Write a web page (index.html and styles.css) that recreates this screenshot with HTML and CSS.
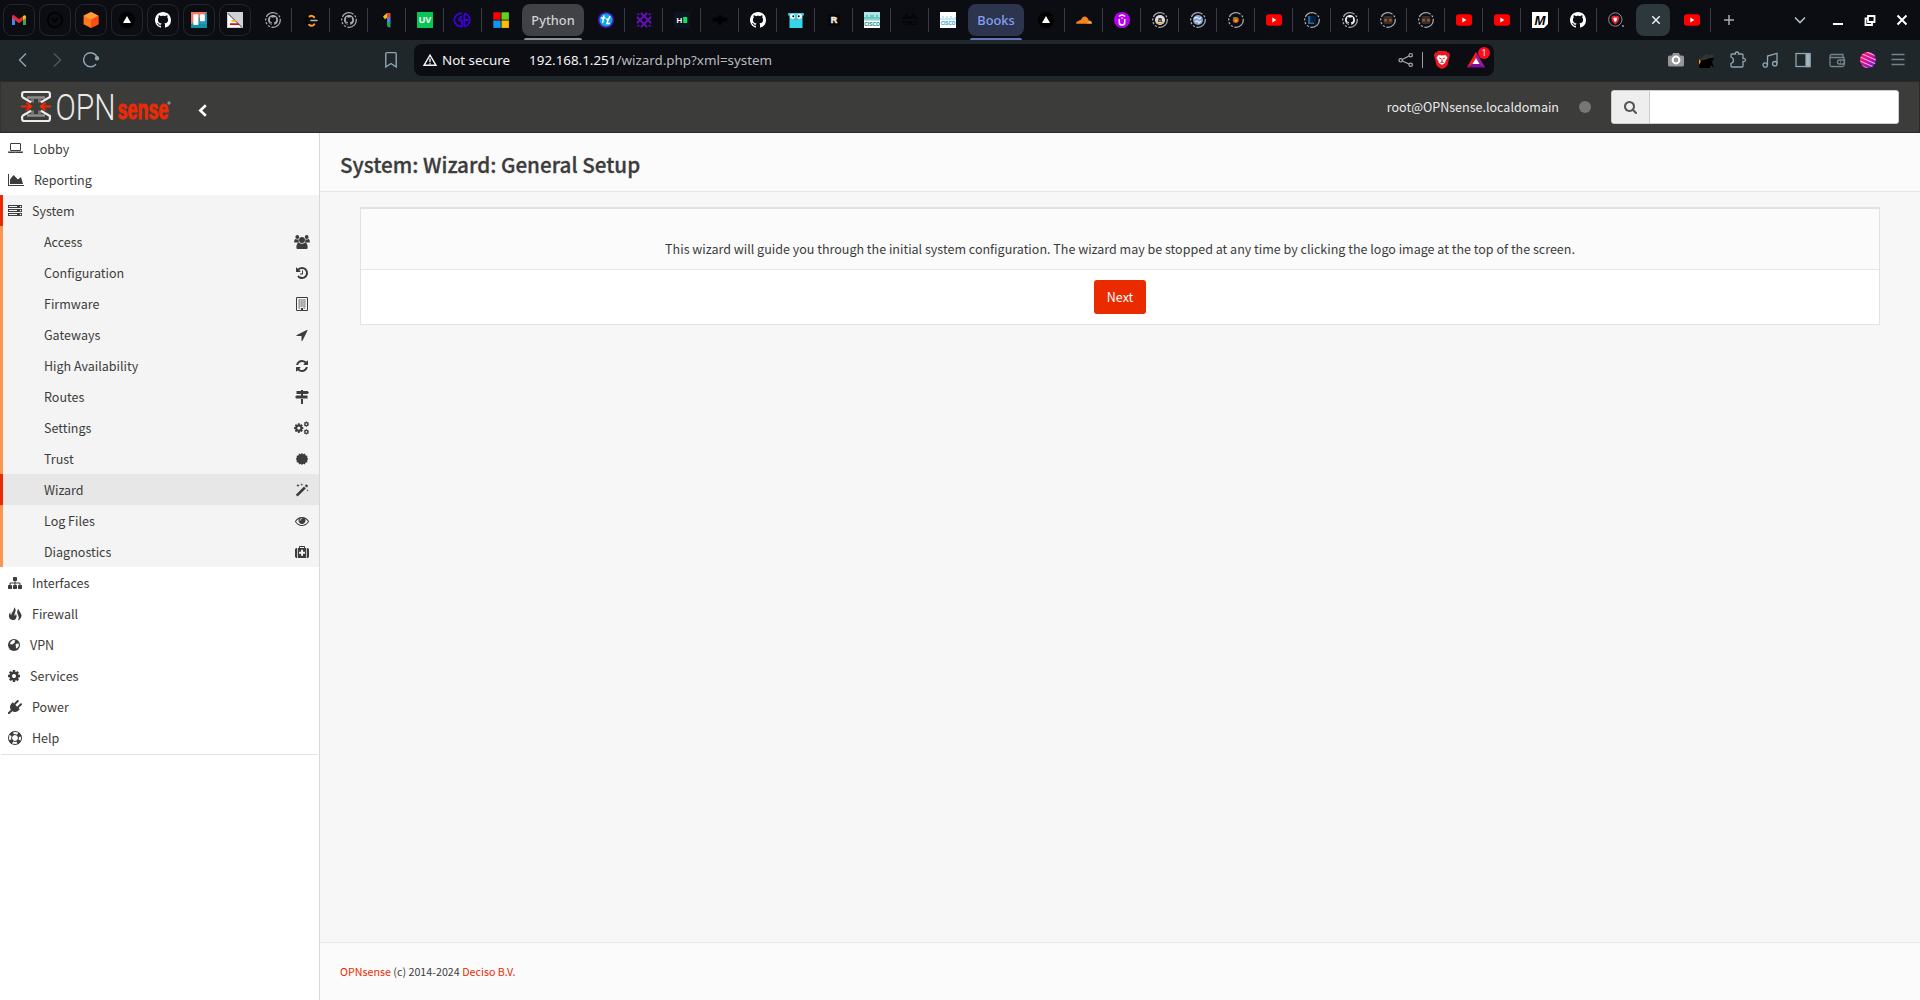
FILE: index.html
```html
<!DOCTYPE html>
<html lang="en">
<head>
<meta charset="utf-8">
<title>Wizard: General Setup | System | OPNsense.localdomain</title>
<link rel="stylesheet" href="styles.css">
</head>
<body>
<svg class="defs" aria-hidden="true">
  <symbol id="github" viewBox="0 0 16 16"><path d="M8 0C3.58 0 0 3.58 0 8c0 3.54 2.29 6.53 5.47 7.59.4.07.55-.17.55-.38 0-.19-.01-.82-.01-1.49-2.01.37-2.53-.49-2.69-.94-.09-.23-.48-.94-.82-1.13-.28-.15-.68-.52-.01-.53.63-.01 1.08.58 1.23.82.72 1.21 1.87.87 2.33.66.07-.52.28-.87.51-1.07-1.78-.2-3.64-.89-3.64-3.95 0-.87.31-1.59.82-2.15-.08-.2-.36-1.02.08-2.12 0 0 .67-.21 2.2.82.64-.18 1.32-.27 2-.27s1.36.09 2 .27c1.53-1.04 2.2-.82 2.2-.82.44 1.1.16 1.92.08 2.12.51.56.82 1.27.82 2.15 0 3.07-1.87 3.75-3.65 3.95.29.25.54.73.54 1.48 0 1.07-.01 1.93-.01 2.2 0 .21.15.46.55.38A8.01 8.01 0 0 0 16 8c0-4.42-3.58-8-8-8z"/></symbol>
  <symbol id="ring" viewBox="0 0 16 16"><circle cx="8" cy="8" r="7.3" fill="none" stroke="#a4a9b0" stroke-width="1.3" stroke-dasharray="13 1.6 2.2 1.6 2.2 1.6 2.2 1.6"/></symbol>
  <symbol id="githubring" viewBox="0 0 16 16"><use href="#ring"/><use href="#github" x="3" y="3" width="10" height="10" fill="#a9adb2"/></symbol>
  <symbol id="youtube" viewBox="0 0 16 16"><rect y="2.3" width="16" height="11.5" rx="2.8" fill="#f00"/><path d="M6.3 5.6v4.8L10.4 8z" fill="#fff"/></symbol>
  <symbol id="vercel" viewBox="0 0 16 16"><circle cx="8" cy="8" r="8" fill="#000"/><path d="M8 4l4 7H4z" fill="#fff"/></symbol>
  <symbol id="cog" viewBox="0 0 1536 1792"><path transform="translate(-128)" d="M1152 896q0-106-75-181t-181-75-181 75-75 181 75 181 181 75 181-75 75-181zm512-109v222q0 12-8 23t-20 13l-185 28q-19 54-39 91 35 50 107 138 10 12 10 25t-9 23q-27 37-99 108t-94 71q-12 0-26-9l-138-108q-44 23-91 38-16 136-29 186-7 28-36 28h-222q-14 0-24.5-8.5t-11.5-21.5l-28-184q-49-16-90-37l-141 107q-10 9-25 9-14 0-25-11-126-114-165-168-7-10-7-23 0-12 8-23 15-21 51-66.500t54-70.500q-27-50-41-99l-183-27q-13-2-21-12.500t-8-23.500v-222q0-12 8-23t19-13l186-28q14-46 39-92-40-57-107-138-10-12-10-24 0-10 9-23 26-36 98.500-107.500t94.500-71.500q13 0 26 10l138 107q44-23 91-38 16-136 29-186 7-28 36-28h222q14 0 24.500 8.500t11.500 21.500l28 184q49 16 90 37l142-107q9-9 24-9 13 0 25 10 129 119 165 170 7 8 7 22 0 12-8 23-15 21-51 66.500t-54 70.500q26 50 41 98l183 28q13 2 21 12.500t8 23.500z"/></symbol>
</svg>

<div class="tabstrip">
  <div class="pinned">
    <span class="pin"><svg viewBox="0 0 16 16"><path d="M1 4v9h3V8z" fill="#4285f4"/><path d="M15 4v9h-3V8z" fill="#34a853"/><path d="M1.200 3.600C2 2.600 3 3 4 4l4 3.200L12 4v4.200L8 11.300 4 8.300 1 6z" fill="#ea2a33"/><path d="M12 4c1-1.200 3-1 3 .8V6l-3 2.300z" fill="#fbbc04"/></svg></span>
    <span class="pin"><svg viewBox="0 0 16 16" fill="none" stroke="#000" stroke-width="1.600"><circle cx="8" cy="8" r="7.200"/><path d="M4.500 6l3.300 3.500L11.500 6"/></svg></span>
    <span class="pin"><svg viewBox="0 0 16 16"><path d="M8 0l7.400 3.800v8.400L8 16 .6 12.200V3.800z" fill="#ff7a1a"/><path d="M8 0l7.400 3.800L8 7.600.6 3.800z" fill="#ff9a3c"/><path d="M8 7.600l7.400-3.800v8.400L8 16z" fill="#ff4d12"/></svg></span>
    <span class="pin"><svg><use href="#vercel"/></svg></span>
    <span class="pin"><svg fill="#fff"><use href="#github"/></svg></span>
    <span class="pin"><svg viewBox="0 0 16 16"><path d="M0 0h16v16H0z" fill="#2796b5"/><path d="M0 0h16L0 12z" fill="#ef7b64"/><path d="M0 12h16v4H0z" fill="#1192a6"/><rect x="2.300" y="2.300" width="5" height="10.700" rx=".8" fill="#fff"/><rect x="9" y="2.300" width="4.800" height="7" rx=".8" fill="#fff"/></svg></span>
    <span class="pin"><svg viewBox="0 0 16 16"><path d="M0 0h16v16H0z" fill="#d2d2d2"/><path d="M1 2l13.500 13H1z" fill="#fff"/><path d="M1 1.500L15 15.500" stroke="#26386e"/><path d="M4.500 8h3.500l1.500 1.800H4.500z" fill="#f5b400"/><path d="M3 11.200h8l1.700 1.900H3z" fill="#d31111"/></svg></span>
  </div>
  <div class="tabs">
    <span class="tab"><svg><use href="#githubring"/></svg></span>
    <span class="tab"><svg viewBox="0 0 16 16" fill="none" stroke-width="1.900" stroke-linecap="round"><path d="M9.500 1.500L3.600 6.700q-2 2 0 4l3.200 3" stroke="#050505"/><path d="M6.500 4.500q2-1.800 4.700.8M6 12.800q2.700 2.300 5.200-.5" stroke="#ffa116"/><path d="M8 8.500h6" stroke="#b3b3b3" stroke-width="1.500"/></svg></span>
    <span class="tab"><svg><use href="#githubring"/></svg></span>
    <span class="tab"><svg viewBox="0 0 16 16"><path d="M4 4.500L8 1v4.500L6 7.500z" fill="#fbbc04"/><path d="M8 1h3.500v5L8 7z" fill="#ea4335"/><path d="M8 6l3.500-1v6H8z" fill="#4285f4"/><path d="M8 10h3.500v5.500Q8 15.500 8 13z" fill="#1ea55b"/></svg></span>
    <span class="tab"><svg viewBox="0 0 16 16"><path d="M0 0h16v16H0z" fill="#06c755"/><text x="8" y="11" class="glyph" font-size="8.500" fill="#fff" textLength="12.500" lengthAdjust="spacingAndGlyphs">UV</text></svg></span>
    <span class="tab"><svg viewBox="0 0 16 16" fill="none" stroke="#3a00e0" stroke-width="1.800"><path d="M7 1.500a6.600 6.600 0 1 0 0 13V8.500H4M7 5Q4.200 5 4 8.500M9.300 1.500v13M9.300 1.500a6.600 6.600 0 0 1 0 13M9.300 8h4"/></svg></span>
    <span class="tab"><svg viewBox="0 0 16 16"><path d="M.3.3h7.400v7.400H.3z" fill="#f00"/><path d="M8.500.3h7.400v7.400H8.500z" fill="#5fd41c"/><path d="M.3 8.500h7.400v7.400H.3z" fill="#0a9bf5"/><path d="M8.500 8.500h7.400v7.400H8.500z" fill="#ffbf00"/></svg></span>
  </div>
  <div class="group group-gray"><span>Python</span></div>
  <div class="tabs">
    <span class="tab"><svg viewBox="0 0 16 16"><circle cx="8" cy="8" r="8" fill="#4a12c0"/><circle cx="8" cy="8" r="6.500" fill="#10a9dc"/><path d="M3 6h4.500M6 3.500L4.500 11M8.500 6.500l1.500 2 2-4.500M10 8l-1 3.500h3" fill="none" stroke="#fff" stroke-width="1.500"/></svg></span>
    <span class="tab"><svg viewBox="0 0 16 16" fill="none" stroke="#5f10b0" stroke-width="2.200" stroke-linecap="round"><path d="M1.500 5.500l3 3M5.500 1.500L11 7M14.500 10.500l-3-3M10.500 14.500L5 9M10.500 1.500l-3 3M14.500 5.500L9 11M5.500 14.500l3-3M1.500 10.500L7 5M2.200 2.200l.1.100M13.700 2.200l.1.100M2.200 13.700l.1.100M13.700 13.700l.1.100"/></svg></span>
    <span class="tab"><svg viewBox="0 0 16 16"><path d="M0 0h16v16H0z" fill="#0d1420"/><text x="5.500" y="11" class="glyph" font-size="8" fill="#fff">H</text><path d="M9.200 5h4v6h-4z" fill="#06e968"/></svg></span>
    <span class="tab"><svg viewBox="0 0 16 16" fill="#000"><path d="M0 7q4-3 6.500-.5l-1 3Q1.500 11 0 7zM16 7q-4-3-6.500-.5l1 3Q14.500 11 16 7z"/><ellipse cx="8" cy="8" rx="2.300" ry="5"/></svg></span>
    <span class="tab"><svg fill="#fff"><use href="#github"/></svg></span>
    <span class="tab"><svg viewBox="0 0 16 16"><path d="M1.500 16V3q0-2 2-2h9q2 0 2 2v13z" fill="#35d6ec"/><circle cx="1.500" cy="2.200" r="1.500" fill="#35d6ec"/><circle cx="14.500" cy="2.200" r="1.500" fill="#35d6ec"/><circle cx="4.500" cy="4.300" r="2.500" fill="#fff"/><circle cx="11.500" cy="4.300" r="2.500" fill="#fff"/><circle cx="5.300" cy="4.300" r="1"/><circle cx="10.700" cy="4.300" r="1"/><ellipse cx="8" cy="7.500" rx="1.500" ry="1" fill="#b28d5b"/></svg></span>
    <span class="tab"><svg viewBox="0 0 16 16"><rect x="2" y="2" width="12" height="12" rx="2" fill="#050505"/><text x="8" y="11.200" class="glyph" font-size="9" fill="#f5efdf" stroke="#f5efdf" stroke-width=".5">R</text></svg></span>
    <span class="tab"><svg viewBox="0 0 16 16"><path d="M0 0h16v16H0z" fill="#fff"/><path d="M0 0h16v9H0z" fill="#aee6e3"/><path d="M1 5v2.500M3 3v4.500M5 5v2.500M7 3v4.500M9 3v4.500M11 5v2.500M13 3v4.500M15 5v2.500" stroke="#29a9ad"/><text x="8" y="13.800" class="glyph" font-size="6" fill="#087c88" textLength="15.500" lengthAdjust="spacingAndGlyphs">CISCO</text></svg></span>
    <span class="tab"><svg viewBox="0 0 16 16"><path d="M1 5v2M3 3v4M5 1v6M7 4v3M9 4v3M11 1v6M13 3v4M15 5v2" stroke="#000"/><text x="8" y="13.400" class="glyph" font-size="5.500" fill="#000" textLength="15" lengthAdjust="spacingAndGlyphs">CISCO</text></svg></span>
    <span class="tab"><svg viewBox="0 0 16 16"><path d="M0 0h16v16H0z" fill="#fff"/><path d="M1 6v2M3 4v4M5 6v2M7 4v4M9 6v2M11 4v4M13 6v2M15 5v3" stroke="#8bcfe8"/><text x="8" y="13.300" class="glyph" font-size="5.500" fill="#18a0cf" textLength="14.500" lengthAdjust="spacingAndGlyphs">CISCO</text></svg></span>
  </div>
  <div class="group group-blue"><span>Books</span></div>
  <div class="tabs">
    <span class="tab"><svg><use href="#vercel"/></svg></span>
    <span class="tab"><svg viewBox="0 0 16 16"><path d="M0 11.800q0-2.500 2.500-2.800Q4 7.500 5 8q1-3.500 3.800-3.500T13 9l-1.500 2.800z" fill="#f6821f"/><path d="M11 11.800L13 8.500q3 .5 3 3.300z" fill="#fbad41"/></svg></span>
    <span class="tab"><svg viewBox="0 0 16 16"><circle cx="8" cy="8" r="8" fill="#b800f0"/><path d="M5.300 7v3.500q0 2.500 2.700 2.500t2.700-2.500V7M5 4.500Q8 1.300 11 4.500M8 5.500v1.200" fill="none" stroke="#fff" stroke-width="1.500"/></svg></span>
    <span class="tab"><svg viewBox="0 0 16 16"><use href="#ring"/><circle cx="8" cy="8" r="5" fill="#ddd"/><text x="8" y="10" class="glyph" font-size="8" fill="#111">a</text><path d="M4.500 10.500q3.500 2.500 7 0" stroke="#f0a030" stroke-width="1.200" fill="none"/></svg></span>
    <span class="tab"><svg viewBox="0 0 16 16"><use href="#ring"/><circle cx="8" cy="8" r="5" fill="#7d9fce"/><path d="M4 7q2-3 4-1t3-1M5 10q3-2 4 1l2-2" stroke="#dbe6f4" stroke-width="1.300" fill="none"/></svg></span>
    <span class="tab"><svg viewBox="0 0 16 16"><use href="#ring"/><circle cx="7.800" cy="8" r="3" fill="#d8601c"/><path d="M5 5l3 .5L6 8z" fill="#3fa048"/><circle cx="8" cy="8.500" r="1.100" fill="#f5c022"/></svg></span>
    <span class="tab"><svg><use href="#youtube"/></svg></span>
    <span class="tab"><svg viewBox="0 0 16 16"><use href="#ring"/><path d="M4 4h8v8H4z" fill="#071f3c"/><path d="M4 4h2.200v8H4zM6 10.500h4V12H6z" fill="#1c68a5"/></svg></span>
    <span class="tab"><svg viewBox="0 0 16 16"><use href="#ring"/><use href="#github" x="3" y="3" width="10" height="10" fill="#eee"/></svg></span>
    <span class="tab"><svg viewBox="0 0 16 16"><use href="#ring"/><rect x="3.500" y="4" width="9" height="8" rx="2" fill="#33302e"/><path d="M4.300 7h2.500v2.500H4.300zM9.200 7h2.500v2.500H9.200z" fill="#b8501c"/></svg></span>
    <span class="tab"><svg viewBox="0 0 16 16"><use href="#ring"/><rect x="3.500" y="4" width="9" height="8" rx="2" fill="#33302e"/><path d="M4.300 7h2.500v2.500H4.300zM9.200 7h2.500v2.500H9.200z" fill="#b8501c"/></svg></span>
    <span class="tab"><svg><use href="#youtube"/></svg></span>
    <span class="tab"><svg><use href="#youtube"/></svg></span>
    <span class="tab"><svg viewBox="0 0 16 16"><path d="M0 0h16v12l-4 4H0z" fill="#fff"/><text x="8" y="12.500" class="glyph" font-size="12.500" font-style="italic" fill="#000" textLength="11" lengthAdjust="spacingAndGlyphs">M</text></svg></span>
    <span class="tab"><svg fill="#fff"><use href="#github"/></svg></span>
    <span class="tab"><svg viewBox="0 0 16 16"><circle cx="7.300" cy="7.500" r="6.700" fill="none" stroke="#888d93"/><path d="M4.500 3.800h5.600l1.400 2-1.400 4-2.800 2.700-2.800-2.700-1.400-4z" fill="#f11d2b"/><path d="M5.300 5.800h4l-.8 3-1.200 1.200-1.200-1.200z" fill="#fff"/><circle cx="15" cy="14" r=".9" fill="#aaa"/></svg></span>
  </div>
  <div class="tab-active"><svg viewBox="0 0 8 8" stroke="#eef0f1" stroke-width="1.500"><path d="M.3.3l7.400 7.400M7.700.3L.3 7.700"/></svg></div>
  <div class="tabs lone"><span class="tab"><svg><use href="#youtube"/></svg></span></div>
  <svg class="newtab" viewBox="0 0 10 10" stroke="#a8adb2" stroke-width="1.500"><path d="M5 0v10M0 5h10"/></svg>
  <div class="window-buttons">
    <svg viewBox="0 0 16 16" fill="none" stroke="#aebcc3" stroke-width="1.600"><path d="M3 5.500l5 5 5-5"/></svg>
    <svg viewBox="0 0 16 16" fill="none" stroke="#fff" stroke-width="2"><path d="M3 12h10"/></svg>
    <svg viewBox="0 0 16 16" fill="none" stroke="#fff" stroke-width="1.800"><path d="M6 4h6.500v6H6zM6 6.500H3.500V13H10v-2.500"/></svg>
    <svg viewBox="0 0 16 16" fill="none" stroke="#fff" stroke-width="2"><path d="M3.500 3.500l9 9M12.500 3.500l-9 9"/></svg>
  </div>
</div>

<div class="toolbar">
  <div class="nav">
    <svg viewBox="0 0 16 16"><path d="M11 1.500L4.500 8l6.500 6.500"/></svg>
    <svg viewBox="0 0 16 16" class="dim"><path d="M5 1.500L11.500 8 5 14.500"/></svg>
    <svg viewBox="0 0 16 16"><path d="M13 12.200A7 7 0 1 1 14.200 5.500"/><circle cx="14" cy="6.200" r="1.500" fill="#8fa5b1"/></svg>
    <svg viewBox="0 0 16 16" class="bookmark"><path d="M2.800 1.800q0-1.200 1.200-1.200h8q1.200 0 1.200 1.200V15L8 11.500 2.800 15z"/></svg>
  </div>
  <div class="omnibox">
    <svg class="warn" viewBox="0 0 14 12" fill="none" stroke="#f2f3f4" stroke-width="1.400"><path d="M7 1.200L13 11.300H1z"/><path d="M7 4.500v3.700M7 9.200v1.200"/></svg>
    <span class="secure">Not secure</span>
    <span class="url"><b>192.168.1.251</b>/wizard.php?xml=system</span>
    <div class="omni-icons">
      <svg viewBox="0 0 16 16" fill="none" stroke="#a8adb2" stroke-width="1.200"><circle cx="2.700" cy="8.300" r="1.700"/><circle cx="12.700" cy="3.200" r="1.700"/><circle cx="12.700" cy="12.800" r="1.700"/><path d="M4.300 7.500L11 4M4.300 9l6.700 3"/></svg>
      <i></i>
      <svg viewBox="0 0 16 18"><path d="M4 0h8l1.500 1.500 1.500 0 1 3-.6 1.500-1.700 7.500Q13 16 8 18q-5-2-5.700-4.500L.6 6 0 4.500l1-3h1.500z" fill="#f01522"/><path d="M4.500 4l3.500.6 3.500-.6 2 2.800-1.800 3-.7 2.200-3 2-3-2-.7-2.200-1.800-3z" fill="#fff"/><path d="M5 7l2 .7M11 7l-2 .7M8 7.500v3M6.500 11.500L8 10.700l1.500.8" stroke="#f01522" stroke-width=".9"/></svg>
      <span class="rewards"><svg viewBox="0 0 18 16"><path d="M9 0L0 15.500h18z" fill="#7b0f9c"/><path d="M9 0L0 15.500 5.500 12 9 6z" fill="#ff1a0a"/><path d="M9 0v6l3.500 6 5.500 3.500z" fill="#9c1f8e"/><path d="M9 6l-3.500 6h7z" fill="#fff"/></svg><em>1</em></span>
    </div>
  </div>
  <div class="extensions">
    <svg viewBox="0 0 16 16"><path d="M0 5q0-1.500 1.500-1.500H4L5 1h6l1 2.500h2.500Q16 3.500 16 5v8q0 1.500-1.500 1.500h-13Q0 14.500 0 13z" fill="#979797"/><circle cx="8" cy="8" r="3.400" fill="none" stroke="#fff" stroke-width="2"/></svg>
    <svg viewBox="0 0 16 16"><path d="M0 7l5-3 2-2 3 1 5-1-2 5-11 2z" fill="#343434"/><path d="M0 9q7-1 11-3h4l-2 4 2 6-3-3-1 3H0z" fill="#000"/><path d="M0 7l2 2.500L0 13z" fill="#ff8a00"/></svg>
    <svg viewBox="0 0 16 16" class="line"><path d="M1 5V3q0-1 1-1h3.500Q5 0 7 0t1.500 2H12q1 0 1 1v3.500q2.500-.3 2.500 1.500T13 9.500V14q0 1-1 1H2q-1 0-1-1v-2.500q2.500-.8 2.500-3.200T1 5z"/></svg>
    <svg viewBox="0 0 16 16" class="line"><path d="M5.500 13V4l9.500-2.700V11.500"/><circle cx="3.200" cy="13" r="2.200"/><circle cx="12.800" cy="11.700" r="2.200"/></svg>
    <svg viewBox="0 0 16 16" class="line"><rect x="1" y="1.500" width="14" height="13"/><path d="M11 2h4v12.500h-4z" fill="#a5b9c4"/></svg>
    <svg viewBox="0 0 16 16" class="line dimline"><path d="M1 4v9q0 1.500 1.500 1.500h11q1.500 0 1.500-1.500V5.500H2.500Q1 5.500 1 4t1.500-1.500H14v3M15.500 8h-5q-2 0-2 2t2 2h5zM11 10h1"/></svg>
    <svg viewBox="0 0 16 16"><defs><linearGradient id="av" x1="0" y1="0" x2="1" y2="1"><stop offset=".2" stop-color="#ff1478"/><stop offset=".9" stop-color="#7a12c8"/></linearGradient><clipPath id="avc"><circle cx="8" cy="8" r="8"/></clipPath></defs><g clip-path="url(#avc)"><path d="M0 0h16v16H0z" fill="url(#av)"/><path d="M0 1l16 7M0 5l16 7M0 9l16 7M0-3l16 7M0 13l16 7" stroke="#f6b5e2" stroke-width="1.100"/></g></svg>
    <svg viewBox="0 0 16 16" class="line dimline"><path d="M1.500 2.500h13M1.500 7.500h13M1.500 12.500h13"/></svg>
  </div>
</div>

<header class="topbar">
  <svg class="logo" viewBox="0 0 152 32">
    <path d="M6 6.500h18M6 24.500h18" stroke="#8f8d8c" stroke-width="2.500"/>
    <path d="M11.500 8v3.500M18.500 8v3.500M11.500 19.500V23M18.500 19.500V23" stroke="#777573" stroke-width="3"/>
    <g fill="none" stroke="#eceaea" stroke-width="2.200" stroke-linejoin="round">
      <path d="M1.100 6V3q0-2 2-2h23.800q2 0 2 2v3l-9 5.300M1.100 6l9 5.300M1.100 25v3q0 2 2 2h23.800q2 0 2-2v-3l-9-5.300M1.100 25l9-5.300"/>
    </g>
    <path d="M0 15.500h9M5.500 11.500l4.500 4-4.500 4M30 15.500h-9M24.500 11.500l-4.500 4 4.500 4" fill="none" stroke="#ea2b05" stroke-width="2.200"/>
    <text class="logo-opn" x="34.500" y="28.500" textLength="60" lengthAdjust="spacingAndGlyphs">OPN</text>
    <text class="logo-sense" x="96.500" y="28.300" textLength="51" lengthAdjust="spacingAndGlyphs">sense</text>
    <circle cx="148" cy="12" r="1.700" fill="#8b8a88"/>
  </svg>
  <svg class="collapse" viewBox="0 0 9 13"><path d="M7.800 1.200L2.300 6.500l5.500 5.300" fill="none" stroke="#fff" stroke-width="2.600"/></svg>
  <span class="user">root@OPNsense.localdomain</span>
  <span class="status"></span>
  <div class="search">
    <span><svg viewBox="0 0 1664 1664"><path transform="translate(-64 -128)" d="M1216 832q0-185-131.500-316.500t-316.500-131.500-316.500 131.500-131.500 316.500 131.500 316.500 316.500 131.500 316.500-131.500 131.500-316.500zm512 832q0 52-38 90t-90 38q-54 0-90-38l-343-342q-179 124-399 124-143 0-273.500-55.500t-225-150-150-225-55.500-273.500 55.500-273.500 150-225 225-150 273.500-55.500 273.500 55.500 225 150 150 225 55.500 273.500q0 220-124 399l343 343q37 37 37 90z"/></svg></span>
    <input type="text" aria-label="Search">
  </div>
</header>

<div class="page">
  <nav class="sidebar">
    <a><svg class="w15" viewBox="0 0 1920 1792"><path d="M416 1152q-66 0-113-47t-47-113v-704q0-66 47-113t113-47h1088q66 0 113 47t47 113v704q0 66-47 113t-113 47h-1088zm-32-864v704q0 13 9.500 22.500t22.500 9.500h1088q13 0 22.500-9.500t9.500-22.500v-704q0-13-9.500-22.500t-22.500-9.500h-1088q-13 0-22.500 9.500t-9.500 22.500zm1376 928h160v96q0 40-47 68t-113 28h-1600q-66 0-113-28t-47-68v-96h1760zm-720 96q16 0 16-16t-16-16h-160q-16 0-16 16t16 16h160z"/></svg>Lobby</a>
    <a><svg class="w16" viewBox="0 0 2048 1792"><path d="M2048 1536v128h-2048v-1536h128v1408h1920zM1664 512l256 896h-1664v-576l448-576 576 576z"/></svg>Reporting</a>
    <div class="open">
      <a class="current"><svg class="w14" viewBox="0 0 1792 1792"><path d="M128 1408h1024v-128h-1024v128zm0-512h1024v-128h-1024v128zm1568 448q0-40-28-68t-68-28-68 28-28 68 28 68 68 28 68-28 28-68zm-1568-960h1024v-128h-1024v128zm1568 448q0-40-28-68t-68-28-68 28-28 68 28 68 68 28 68-28 28-68zm0-512q0-40-28-68t-68-28-68 28-28 68 28 68 68 28 68-28 28-68zm96 832v384h-1792v-384h1792zm0-512v384h-1792v-384h1792zm0-512v384h-1792v-384h1792z"/></svg>System</a>
      <a class="sub">Access<svg class="w16" viewBox="0 0 16 14"><circle cx="3.300" cy="2" r="1.900"/><circle cx="12.700" cy="2" r="1.900"/><path d="M.2 7.500Q0 4 1.800 4q1.700 1 3 .2Q4.300 6 5 7.500zM15.800 7.500Q16 4 14.200 4q-1.700 1-3 .2.500 1.800-.2 3.300zM3 14q-1-1-.5-3.500T4.800 7.600Q8 10 11.200 7.600q1.800.4 2.300 2.900T13 14z"/><circle cx="8" cy="5" r="3"/></svg></a>
      <a class="sub">Configuration<svg viewBox="0 0 1792 1792"><path d="M1664 896q0 156-61 298t-164 245-245 164-298 61q-172 0-327-72.500t-264-204.500q-7-10-6.500-22.500t8.500-20.500l137-138q10-9 25-9 16 2 23 12 73 95 179 147t225 52q104 0 198.500-40.500t163.500-109.500 109.500-163.500 40.500-198.500-40.500-198.500-109.500-163.500-163.500-109.500-198.500-40.500q-98 0-188 35.500t-160 101.500l137 138q31 30 14 69-17 40-59 40h-448q-26 0-45-19t-19-45v-448q0-42 40-59 39-17 69 14l130 129q107-101 244.500-156.500t284.500-55.500q156 0 298 61t245 164 164 245 61 298zm-640-288v448q0 14-9 23t-23 9h-320q-14 0-23-9t-9-23v-64q0-14 9-23t23-9h224v-352q0-14 9-23t23-9h64q14 0 23 9t9 23z"/></svg></a>
      <a class="sub">Firmware<svg viewBox="0 0 14 14"><path d="M1.500.5h11v13h-11z" fill="none" stroke="#3c3c3b"/><path d="M3.500 3h7M3.500 5h7M3.500 7h7M3.500 9h7M3.500 11h2M8.500 11h2" stroke="#3c3c3b" stroke-dasharray="1.400 .5"/><path d="M6 11h2v2.500H6z"/></svg></a>
      <a class="sub">Gateways<svg viewBox="0 0 1792 1792"><path d="M1593 349l-640 1280q-17 35-57 35-5 0-15-2-22-5-35.500-22.500t-13.500-39.500v-576h-576q-22 0-39.500-13.500t-22.500-35.500 4-42 29-30l1280-640q13-7 29-7 27 0 45 19 15 14 18.500 34.500t-6.500 39.500z"/></svg></a>
      <a class="sub">High Availability<svg viewBox="0 0 1792 1792"><path d="M1639 1056q0 5-1 7-64 268-268 434.500t-478 166.500q-146 0-282.500-55t-243.500-157l-129 129q-19 19-45 19t-45-19-19-45v-448q0-26 19-45t45-19h448q26 0 45 19t19 45-19 45l-137 137q71 66 161 102t187 36q134 0 250-65t186-179q11-17 53-117 8-23 30-23h192q13 0 22.500 9.500t9.500 22.500zm25-800v448q0 26-19 45t-45 19h-448q-26 0-45-19t-19-45 19-45l138-138q-148-137-349-137-134 0-250 65t-186 179q-11 17-53 117-8 23-30 23h-199q-13 0-22.500-9.500t-9.500-22.500v-7q65-268 270-434.500t480-166.500q146 0 284 55.500t245 156.500l130-129q19-19 45-19t45 19 19 45z"/></svg></a>
      <a class="sub">Routes<svg viewBox="0 0 14 14"><path d="M6 0h2v1h4.500L14 2.500 12.500 4h-11V1H6zM6 9h2v5H6zM1.500 5.500h11v3h-11L0 7zM6 4h2v2H6z"/></svg></a>
      <a class="sub">Settings<svg class="w15" viewBox="0 0 15 14"><use href="#cog" x="0" y="1.500" width="9.600" height="11.200"/><use href="#cog" x="9.700" y="0" width="5.300" height="6.200"/><use href="#cog" x="9.700" y="7.800" width="5.300" height="6.200"/></svg></a>
      <a class="sub">Trust<svg viewBox="0 0 14 14"><path d="M7 1l1.300 1.300L10 1.600l.6 1.800 1.800.4-.2 1.900L13.200 7l-1 1.300.2 1.900-1.800.4-.6 1.800-1.700-.7L7 13l-1.300-1.300-1.700.7-.6-1.800-1.800-.4.200-1.900L.8 7l1-1.300-.2-1.900 1.800-.4L4 1.600l1.700.7z"/></svg></a>
      <a class="sub active">Wizard<svg viewBox="0 0 14 14"><path d="M.8 11.800L9 3.600l1.800 1.800-8.200 8.200zM9.800 2.800l1.600-1.600 1.800 1.800-1.600 1.600zM3 .8l.5 1.200 1.200.5-1.200.5L3 4.200 2.500 3l-1.200-.5L2.500 2zM6.800.2l.4 1 1 .4-1 .4-.4 1-.4-1-1-.4 1-.4zM12.700 6l.3.9.9.3-.9.3-.3.9-.3-.9-.9-.3.900-.3z"/></svg></a>
      <a class="sub">Log Files<svg viewBox="0 0 1792 1792"><path d="M1664 960q-152-236-381-353 61 104 61 225 0 185-131.500 316.500t-316.500 131.500-316.500-131.500-131.500-316.500q0-121 61-225-229 117-381 353 133 205 333.500 326.500t434.500 121.500 434.500-121.500 333.500-326.500zm-720-384q0-20-14-34t-34-14q-125 0-214.500 89.500t-89.500 214.500q0 20 14 34t34 14 34-14 14-34q0-86 61-147t147-61q20 0 34-14t14-34zm848 384q0 34-20 69-140 230-376.500 368.500t-499.500 138.500-499.500-139-376.500-368q-20-35-20-69t20-69q140-229 376.500-368t499.500-139 499.500 139 376.500 368q20 35 20 69z"/></svg></a>
      <a class="sub">Diagnostics<svg viewBox="0 0 1792 1792"><path d="M1280 1088v-192q0-14-9-23t-23-9h-224v-224q0-14-9-23t-23-9h-192q-14 0-23 9t-9 23v224h-224q-14 0-23 9t-9 23v192q0 14 9 23t23 9h224v224q0 14 9 23t23 9h192q14 0 23-9t9-23v-224h224q14 0 23-9t9-23zm-640-704h512v-128h-512v128zm-384 0v1280h-32q-92 0-158-66t-66-158v-832q0-92 66-158t158-66h32zm1184 0v1280h-1088v-1280h160v-160q0-40 28-68t68-28h576q40 0 68 28t28 68v160h160zm352 224v832q0 92-66 158t-158 66h-32v-1280h32q92 0 158 66t66 158z"/></svg></a>
    </div>
    <a><svg class="w14" viewBox="0 0 1792 1792"><path d="M1792 1248v320q0 40-28 68t-68 28h-320q-40 0-68-28t-28-68v-320q0-40 28-68t68-28h96v-192h-512v192h96q40 0 68 28t28 68v320q0 40-28 68t-68 28h-320q-40 0-68-28t-28-68v-320q0-40 28-68t68-28h96v-192h-512v192h96q40 0 68 28t28 68v320q0 40-28 68t-68 28h-320q-40 0-68-28t-28-68v-320q0-40 28-68t68-28h96v-192q0-52 38-90t90-38h512v-192h-96q-40 0-68-28t-28-68v-320q0-40 28-68t68-28h320q40 0 68 28t28 68v320q0 40-28 68t-68 28h-96v192h512q52 0 90 38t38 90v192h96q40 0 68 28t28 68z"/></svg>Interfaces</a>
    <a><svg class="w14" viewBox="0 0 14 14"><path d="M6 .3Q8.800 2.500 7 5.500 6 7.500 6.800 9q1.200-.8.900-2.700Q9.500 9 8 11.500 7 13.300 4.500 13 .8 12.300.9 8.500 1 6.500 2.300 5q-.3 2.500.8 3.300Q3 6.500 5 4.300 6.500 2.500 6 .3z"/><path d="M10.300 1.700q.5 1.800 1.700 3.300 2 2.700 1.300 5-.8 2.700-3.500 3.800Q11.700 11 10.300 8.500L9.200 6Q8.700 4 10.300 1.700z"/></svg>Firewall</a>
    <a><svg class="w12" viewBox="0 0 12 14"><circle cx="6" cy="7" r="6"/><path d="M2.600 4L5 2l2.400.2-.9 1.200.7.500-1.200 1.300-1.200 1.100-1.500.1L2 6zM8.300 5.700l2.300-.2.300 2.400-2.100 2.500-1-.4.200-1.900-.7-1z" fill="#fff"/></svg>VPN</a>
    <a><svg class="w12"><use href="#cog"/></svg>Services</a>
    <a><svg class="w14" viewBox="0 0 1792 1792"><path d="M1755 453q37 38 37 90.500t-37 90.500l-401 400 150 150-160 160q-163 163-389.500 186.500t-411.500-100.500l-362 362h-181v-181l362-362q-124-185-100.500-411.500t186.500-389.500l160-160 150 150 400-401q38-37 91-37t90 37 37 90.500-37 90.500l-400 401 234 234 401-400q38-37 91-37t90 37z"/></svg>Power</a>
    <a><svg class="w14" viewBox="0 0 14 14"><g fill="none" stroke="#3c3c3b"><circle cx="7" cy="7" r="6.500"/><circle cx="7" cy="7" r="3.500"/><circle cx="7" cy="7" r="5" stroke-width="3.600" stroke-dasharray="3.400 4.454" stroke-dashoffset="-2.227"/></g></svg>Help</a>
  </nav>

  <main>
    <div class="title"><h1>System: Wizard: General Setup</h1></div>
    <section class="content">
      <div class="panel">
        <p>This wizard will guide you through the initial system configuration. The wizard may be stopped at any time by clicking the logo image at the top of the screen.</p>
        <div class="actions"><button type="button">Next</button></div>
      </div>
    </section>
    <footer><a>OPNsense</a> (c) 2014-2024 <a>Deciso B.V.</a></footer>
  </main>
</div>
</body>
</html>
```
FILE: styles.css
```css
* { box-sizing: border-box; }
body {
  margin: 0;
  height: 1000px;
  display: flex;
  flex-direction: column;
  overflow: hidden;
  background: #f7f7f7;
  color: #3c3c3b;
  font: 12.53px/20px "Noto Sans CJK SC", sans-serif;
}
svg { display: block; flex: none; overflow: visible; }
.defs { position: absolute; width: 0; height: 0; overflow: hidden; }
.glyph { font-family: "Liberation Sans", sans-serif; font-weight: 700; text-anchor: middle; }

/* tab strip */
.tabstrip {
  height: 40px;
  flex: none;
  display: flex;
  background: #0c0d12;
  padding-left: 3px;
  font-family: "Noto Sans", sans-serif;
}
.pin > svg, .tab > svg, .window-buttons > svg { width: 16px; height: 16px; }
.pinned { display: flex; gap: 4px; padding-top: 4px; width: 251px; }
.pin {
  width: 32px;
  height: 32px;
  border: 1px solid #22262a;
  border-radius: 9px;
  display: flex;
  align-items: center;
  justify-content: center;
}
.tabs { display: flex; padding-top: 8px; }
.tab {
  width: 38px;
  height: 24px;
  border-right: 1px solid #3a3c3f;
  display: flex;
  align-items: center;
  justify-content: center;
}
.tab:last-child { border-right-color: transparent; }
.lone .tab { border-right-color: #3a3c3f; }
.group {
  margin: 4px 3px 0 1px;
  height: 36px;
  font-size: 12.8px;
  font-weight: 500;
  line-height: 32px;
  text-align: center;
}
.group span { display: block; height: 32px; border-radius: 8px; }
.group::after { content: ""; display: block; height: 2px; margin: 2px 2px 0; border-radius: 2px 2px 0 0; }
.group-gray { width: 62px; margin-left: 2px; color: #d0d1d3; }
.group-gray span { background: #414246; }
.group-gray::after { background: #909195; }
.group-blue { width: 56px; color: #84a0f5; }
.group-blue span { background: #2d344d; }
.group-blue::after { background: #6474b4; }
.tab-active {
  width: 34px;
  height: 32px;
  margin: 4px 3px 0 1px;
  border-radius: 8px;
  background: #2c383c;
  display: flex;
  align-items: center;
  justify-content: center;
  padding-left: 6px;
}
.tab-active svg { width: 8px; height: 8px; }
.newtab { width: 10px; height: 10px; margin: 15px 0 0 13px; }
.window-buttons { display: flex; gap: 16px; margin-left: auto; padding: 12px 10px 0 0; }
.window-buttons svg:first-child { margin-right: 6px; }

/* address bar */
.toolbar {
  height: 41px;
  flex: none;
  display: flex;
  align-items: center;
  padding: 0 7px 1px 0;
  background: #1f272a;
  font: 13.4px/30px "Noto Sans", sans-serif;
}
.nav { width: 414px; display: flex; padding-left: 15px; gap: 18px; }
.nav svg { width: 16px; height: 16px; fill: none; stroke: #8fa5b1; stroke-width: 1.4; }
.nav .dim { stroke: #4d5b62; }
.nav .bookmark { margin: 0 15px 0 auto; }
.omnibox {
  width: 1080px;
  height: 32px;
  display: flex;
  align-items: center;
  border-radius: 8px;
  background: #0c0d12;
  padding: 0 9px;
  color: #f2f3f4;
}
.warn { width: 14px; height: 12px; }
.secure { margin: 0 19px 0 5px; }
.url { color: #b9bcbf; }
.url b { font-weight: 400; color: #f2f3f4; }
.omni-icons { margin-left: auto; display: flex; align-items: center; }
.omni-icons svg { width: 16px; height: 16px; }
.omni-icons i { width: 1px; height: 16px; margin: 0 11px 0 8px; background: #9a9ea3; }
.omni-icons > svg:nth-of-type(2) { height: 18px; margin-right: 17px; }
.rewards { position: relative; }
.rewards svg { width: 18px; }
.rewards em {
  position: absolute;
  left: 11px;
  top: -5px;
  width: 12px;
  height: 12px;
  border-radius: 6px;
  background: #ff0d1c;
  color: #fff;
  font: 8px/12px "Noto Sans", sans-serif;
  text-align: center;
}
.extensions {
  margin-left: auto;
  display: grid;
  grid-template-columns: 31px 31px 31px 33px 34px 33px 30px 30px;
  justify-items: center;
}
.extensions svg { width: 16px; height: 16px; }
.line { fill: none; stroke: #8fa5b1; stroke-width: 1.3; }
.dimline { stroke: #71838c; }

/* header */
.topbar {
  height: 52px;
  flex: none;
  display: flex;
  align-items: center;
  background: #3c3c3b;
  border: 1px solid #2b2a2a;
  border-left-color: #333;
  padding: 0 20px 0 20px;
}
.logo { width: 152px; height: 32px; }
.logo-opn { font: 300 36px Roboto, sans-serif; fill: #eceaea; }
.logo-sense { font: 700 27px "Liberation Sans", sans-serif; fill: #ea2b05; stroke: #ea2b05; stroke-width: 1; }
.collapse { width: 9px; height: 13px; margin: 7px 0 0 25px; }
.user { margin-left: auto; color: #ececec; }
.status { width: 12px; height: 12px; border-radius: 50%; background: #777; margin: 0 20px; }
.search {
  width: 288px;
  height: 34px;
  display: flex;
  border: 1px solid #ccc;
  border-radius: 3px;
  background: #fff;
  overflow: hidden;
}
.search span {
  width: 38px;
  display: flex;
  align-items: center;
  justify-content: center;
  background: #eee;
  border-right: 1px solid #ccc;
}
.search svg { width: 13px; height: 13px; fill: #555; }
.search input { flex: 1; min-width: 0; border: 0; padding: 0 12px; background: #fff; }

/* page body */
.page { flex: 1; display: flex; }
.sidebar {
  width: 320px;
  background: #fff;
  border-right: 1px solid #d9d9d9;
}
.sidebar::after { content: ""; display: block; height: 1px; margin: 1px 1px 0; background: #e2e2e2; }
.sidebar a {
  height: 31px;
  display: flex;
  align-items: center;
  padding-left: 8px;
  line-height: 31px;
}
.sidebar svg { height: 14px; fill: #3c3c3b; margin-right: 10px; }
.sidebar .w12 { width: 12px; }
.sidebar .w14 { width: 14px; }
.sidebar .w15 { width: 15px; }
.sidebar .w16 { width: 16px; }
.open { background: #f4f4f4; }
.sidebar .current { border-left: 3px solid #ea2b00; padding-left: 5px; }
.sidebar .sub { border-left: 3px solid #fb9650; padding: 0 10px 0 41px; justify-content: space-between; }
.sidebar .sub svg { width: 14px; margin: 0; }
.sidebar .sub .w15 { width: 15px; }
.sidebar .sub .w16 { width: 16px; margin-right: -1px; }
.sidebar .active { background: #e7e7e7; border-left-color: #ea2b00; }

main { flex: 1; display: flex; flex-direction: column; }
.title {
  height: 59px;
  border-bottom: 1px solid #e6e6e6;
  background: #fbfbfb;
  padding: 18px 20px 0;
}
h1 {
  margin: 0;
  font-size: 20.65px;
  font-weight: 500;
  line-height: 26px;
  -webkit-text-stroke: .3px #3c3c3b;
}
.content { flex: 1; padding: 15px 40px 0; }
.panel {
  height: 118px;
  background: #fff;
  border: 1px solid #e2e2e2;
  border-top-width: 2px;
}
.panel p {
  margin: 0;
  height: 61px;
  padding-top: 30px;
  line-height: 20px;
  text-align: center;
  background: #fbfbfb;
  border-bottom: 1px solid #e8e8e8;
}
.actions { padding-top: 10px; text-align: center; }
button {
  width: 52px;
  height: 34px;
  border: 0;
  border-radius: 3px;
  padding: 0;
  background: #ea2b00;
  color: #fff;
  font: 12.53px/34px "Noto Sans CJK SC", sans-serif;
}
footer {
  height: 58px;
  border-top: 1px solid #e6e6e6;
  background: #fbfbfb;
  padding: 19px 20px;
  font-size: 10.73px;
}
footer a { color: #ea2b00; }
```
